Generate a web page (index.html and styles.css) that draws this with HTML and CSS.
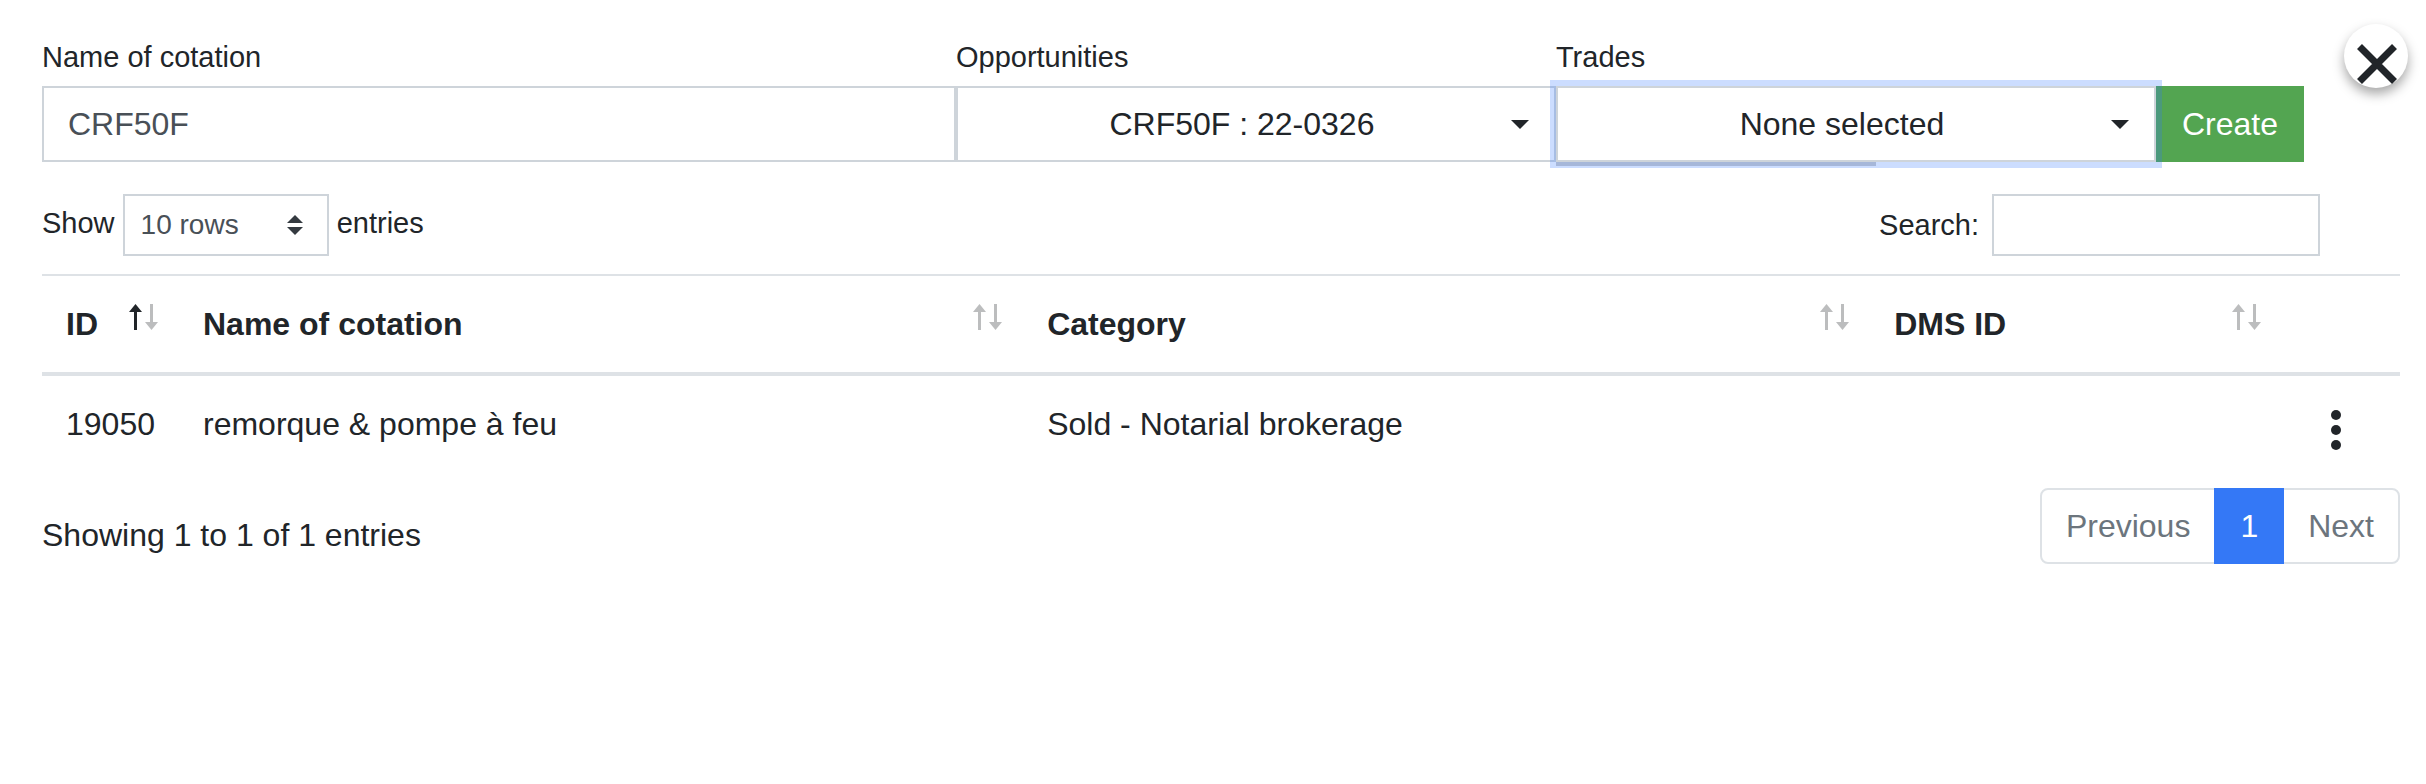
FILE: index.html
```
<!DOCTYPE html>
<html lang="en">
<head>
  <meta charset="UTF-8">
  <title>Cotations</title>
  <link rel="stylesheet" href="styles.css">
</head>
<body>
  <svg class="sprite" aria-hidden="true">
    <symbol id="arrow-up" viewBox="0 0 15 26"><path d="M7.5 0L14 8H9v18H6V8H1z"/></symbol>
    <symbol id="arrow-down" viewBox="0 0 15 26"><path d="M7.5 26L14 18H9V0H6v18H1z"/></symbol>
  </svg>

  <button type="button" class="close" aria-label="Close">
    <svg width="40" height="40" viewBox="0 0 40 40"><path d="M2.5 2.5l35 35M37.5 2.5l-35 35"/></svg>
  </button>

  <main class="panel">
    <form class="create-form">
      <div class="field field-name">
        <label for="cotation">Name of cotation</label>
        <input type="text" id="cotation" value="CRF50F">
      </div>
      <div class="field">
        <label for="opportunities">Opportunities</label>
        <select id="opportunities">
          <option>CRF50F : 22-0326</option>
        </select>
      </div>
      <div class="field">
        <label for="trades">Trades</label>
        <select id="trades" class="focused">
          <option>None selected</option>
        </select>
        <div class="menu"></div>
      </div>
      <button type="button" class="btn-create">Create</button>
    </form>

    <div class="table-tools">
      <label class="length">Show
        <select>
          <option>10 rows</option>
          <option>25 rows</option>
          <option>50 rows</option>
        </select>
        entries</label>
      <label class="search">Search:<input type="search"></label>
    </div>

    <table>
      <colgroup>
        <col class="col-id">
        <col class="col-name">
        <col class="col-category">
        <col>
        <col class="col-actions">
      </colgroup>
      <thead>
        <tr>
          <th><div class="sort asc">ID <span><svg><use href="#arrow-up"/></svg><svg><use href="#arrow-down"/></svg></span></div></th>
          <th><div class="sort">Name of cotation <span><svg><use href="#arrow-up"/></svg><svg><use href="#arrow-down"/></svg></span></div></th>
          <th><div class="sort">Category <span><svg><use href="#arrow-up"/></svg><svg><use href="#arrow-down"/></svg></span></div></th>
          <th><div class="sort">DMS ID <span><svg><use href="#arrow-up"/></svg><svg><use href="#arrow-down"/></svg></span></div></th>
          <th></th>
        </tr>
      </thead>
      <tbody>
        <tr>
          <td>19050</td>
          <td>remorque &amp; pompe à feu</td>
          <td>Sold - Notarial brokerage</td>
          <td></td>
          <td class="actions">
            <button type="button" aria-label="Actions">
              <svg width="10" height="40" viewBox="0 0 10 40"><circle cx="5" cy="5" r="5"/><circle cx="5" cy="20" r="5"/><circle cx="5" cy="35" r="5"/></svg>
            </button>
          </td>
        </tr>
      </tbody>
    </table>

    <div class="table-footer">
      <div class="info">Showing 1 to 1 of 1 entries</div>
      <nav class="pagination">
        <a href="#">Previous</a>
        <a href="#" class="active">1</a>
        <a href="#">Next</a>
      </nav>
    </div>
  </main>
</body>
</html>
```
FILE: styles.css
```
* {
  box-sizing: border-box;
}

body {
  margin: 0;
  background: #fff;
  color: #212529;
  font: 32px/48px "Liberation Sans", Arial, sans-serif;
}

button, input, select {
  margin: 0;
  border-radius: 0;
  font: inherit;
  color: inherit;
}

.sprite {
  display: none;
}

.panel {
  padding: 35px 26px 0 42px;
}

/* close button */
.close {
  position: absolute;
  top: 24px;
  right: 18px;
  display: flex;
  align-items: center;
  justify-content: center;
  width: 64px;
  height: 64px;
  padding: 15px 0 0 2px;
  border: 0;
  border-radius: 50%;
  background: #fff;
  box-shadow: 0 6px 12px rgba(0, 0, 0, .35);
}
.close svg {
  flex: none;
  stroke: #212529;
  stroke-width: 7;
}

/* create form */
.create-form {
  display: flex;
  align-items: flex-end;
  margin-right: 96px;
}
.field {
  position: relative;
  width: 600px;
}
.field-name {
  flex: 1;
}
.field label {
  display: block;
  margin-bottom: 7px;
  font-size: 29px;
  line-height: 44px;
}
.field input,
.field select {
  display: block;
  width: 100%;
  height: 76px;
  padding: 0 24px;
  border: 2px solid #ced4da;
  background: #fff;
}
.field input {
  color: #495057;
}
.field select {
  position: relative;
  padding-right: 52px;
  appearance: none;
  text-align: center;
  text-align-last: center;
  background: #fff url("data:image/svg+xml,%3csvg xmlns='http://www.w3.org/2000/svg' viewBox='0 0 18 9'%3e%3cpath fill='%23212529' d='M0 0h18L9 9z'/%3e%3c/svg%3e") no-repeat right 25px center / 18px 9px;
}
.field select.focused {
  z-index: 2;
  box-shadow: 0 0 0 6px rgba(51, 119, 255, .25);
}
.menu {
  position: absolute;
  top: 100%;
  left: 0;
  z-index: 1;
  width: 320px;
  border: 2px solid #ccc;
}
.btn-create {
  height: 76px;
  padding: 0 24px;
  border: 2px solid #53a551;
  background: #53a551;
  color: #fff;
}

/* length and search */
.table-tools {
  display: flex;
  justify-content: space-between;
  margin: 32px 80px 18px 0;
  font-size: 29px;
  line-height: 44px;
}
.length select {
  width: 206px;
  height: 62px;
  padding: 0 50px 0 16px;
  border: 2px solid #ced4da;
  appearance: none;
  vertical-align: middle;
  font-size: 28px;
  color: #495057;
  background: #fff url("data:image/svg+xml,%3csvg xmlns='http://www.w3.org/2000/svg' viewBox='0 0 4 5'%3e%3cpath fill='%23343a40' d='M2 0L0 2h4zm0 5L0 3h4z'/%3e%3c/svg%3e") no-repeat right 24px center / 16px 20px;
}
.search {
  display: flex;
  align-items: center;
}
.search input {
  width: 328px;
  height: 62px;
  margin-left: 13px;
  padding: 0 16px;
  border: 2px solid #ced4da;
  background: #fff;
}

/* table */
table {
  width: 100%;
  table-layout: fixed;
  border-collapse: separate;
  border-spacing: 0;
}
.col-id {
  width: 137px;
}
.col-name {
  width: 35.8%;
}
.col-category {
  width: 35.92%;
}
.col-actions {
  width: 118px;
}
th, td {
  padding: 24px;
  text-align: left;
  vertical-align: top;
}
th {
  padding-right: 20px;
  border-top: 2px solid #dee2e6;
  border-bottom: 4px solid #dee2e6;
}
.sort {
  display: flex;
  justify-content: space-between;
  align-items: flex-start;
}
.sort span {
  display: flex;
  gap: 1px;
  margin-top: 4px;
}
.sort svg {
  width: 15px;
  height: 26px;
  fill: #bcbdbe;
}
.sort.asc svg:first-child {
  fill: #212529;
}
td.actions {
  padding: 32px 0 20px 42px;
}
.actions button {
  display: flex;
  align-items: center;
  justify-content: center;
  width: 24px;
  height: 44px;
  padding: 0;
  border: 0;
  background: none;
}
.actions svg {
  fill: #212529;
}

/* info and pagination */
.table-footer {
  display: flex;
  justify-content: space-between;
  align-items: flex-start;
  margin-top: 16px;
}
.info {
  padding-top: 23px;
}
.pagination {
  display: flex;
}
.pagination a {
  padding: 12px 24px;
  border: 2px solid #dee2e6;
  color: #6c757d;
  text-decoration: none;
}
.pagination a + a {
  margin-left: -2px;
}
.pagination a:first-child {
  border-radius: 8px 0 0 8px;
}
.pagination a:last-child {
  border-radius: 0 8px 8px 0;
}
.pagination a.active {
  z-index: 1;
  border-color: #3478f6;
  background: #3478f6;
  color: #fff;
}
```
